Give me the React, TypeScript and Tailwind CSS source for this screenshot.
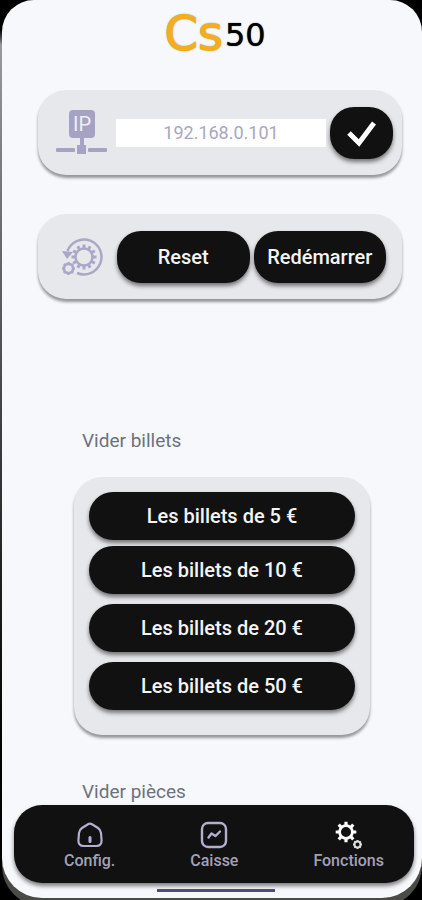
import React, { useState } from 'react';

const BILLS = [
  { value: 5, spacing: '' },
  { value: 10, spacing: 'mt-1.5' },
  { value: 20, spacing: 'mt-2.5' },
  { value: 50, spacing: 'mt-2.5' },
];

const buttonStyle = 'bg-[#111111] text-[#f4f4f4] font-medium text-xl shadow-[0_3px_4px_rgba(0,0,0,0.5)] cursor-pointer';
const panelStyle = 'bg-[#e7e8ec] rounded-[28px] shadow-[0_3px_3px_rgba(0,0,0,0.4)]';

// Teeth for the gear drawings, one short line per tooth
const Teeth: React.FC<{ cx: number; cy: number; inner: number; outer: number; count: number; width: number }> = ({
  cx, cy, inner, outer, count, width,
}) => (
  <>
    {Array.from({ length: count }, (_, i) => (
      <line
        key={i}
        x1={cx}
        y1={cy - inner}
        x2={cx}
        y2={cy - outer}
        strokeWidth={width}
        transform={`rotate(${(i * 360) / count} ${cx} ${cy})`}
      />
    ))}
  </>
);

const IpIcon: React.FC = () => (
  <svg width="52" height="46" viewBox="0 0 52 46" className="shrink-0" fill="#a6a2c4" aria-hidden="true">
    <rect x="13" y="0" width="26" height="28" rx="4" />
    <rect x="24" y="27" width="4" height="8" />
    <rect x="21" y="35" width="9" height="9" />
    <rect x="0" y="38" width="19" height="4" rx="1" />
    <rect x="32" y="38" width="19" height="4" rx="1" />
    <text x="26" y="21" textAnchor="middle" fontSize="20" fill="#eeeef5">IP</text>
  </svg>
);

const RestartIcon: React.FC = () => (
  <svg width="42" height="40" viewBox="0 0 42 40" className="shrink-0" fill="none" stroke="#aaa7c8" aria-hidden="true">
    <path d="M5.5 14 A17.5 17.5 0 1 1 15 36" strokeWidth="2.5" />
    <path d="M0 14 L11 15 L5 22 Z" fill="#aaa7c8" stroke="none" />
    <circle cx="22" cy="20" r="8.5" strokeWidth="2.5" />
    <Teeth cx={22} cy={20} inner={9} outer={12.5} count={12} width={3} />
    <circle cx="6.5" cy="31.5" r="4.6" strokeWidth="2.8" />
    <Teeth cx={6.5} cy={31.5} inner={5} outer={6.5} count={8} width={2} />
  </svg>
);

const HomeIcon: React.FC = () => (
  <svg width="28" height="28" viewBox="0 0 28 28" fill="none" stroke="#b3afd2" strokeWidth="2.2" aria-hidden="true">
    <path d="M12 3.2 Q14 2 16 3.2 L22 7 Q24.6 8.8 25 12 L25.6 19.5 Q25.6 25 20.5 25 H7.5 Q2.4 25 2.4 19.5 L3 12 Q3.4 8.8 6 7 Z" />
    <path d="M14 16.5 V20.5" strokeWidth="3" strokeLinecap="round" />
  </svg>
);

const ChartIcon: React.FC = () => (
  <svg width="28" height="28" viewBox="0 0 28 28" fill="none" stroke="#b3afd2" strokeWidth="2.4" aria-hidden="true">
    <rect x="2" y="2" width="24" height="24" rx="6" />
    <path d="M8.5 16.5 L11.5 12.5 L15.5 15 L20 10.5" strokeLinecap="round" strokeLinejoin="round" />
  </svg>
);

const GearsIcon: React.FC = () => (
  <svg width="28" height="28" viewBox="0 0 28 28" fill="none" stroke="#ffffff" aria-hidden="true">
    <circle cx="11" cy="11" r="6.4" strokeWidth="2.8" />
    <Teeth cx={11} cy={11} inner={7} outer={10.3} count={8} width={3.2} />
    <g stroke="#dddddd">
      <circle cx="22.5" cy="23.5" r="3" strokeWidth="2" />
      <Teeth cx={22.5} cy={23.5} inner={3} outer={4.5} count={8} width={1.8} />
    </g>
  </svg>
);

const NAV_ITEMS = [
  { label: 'Config.', icon: <HomeIcon /> },
  { label: 'Caisse', icon: <ChartIcon /> },
  { label: 'Fonctions', icon: <GearsIcon /> },
];

const App: React.FC = () => {
  const [ip, setIp] = useState('192.168.0.101');

  return (
    <div className="h-screen overflow-hidden bg-black bg-linear-to-b from-black from-3% via-[#9a9a9e] via-5% to-black to-97% pl-0.5 pb-0.5 font-['Roboto','Liberation_Sans',sans-serif]">
      <div className="h-full flex flex-col bg-[#f7f8fc] rounded-t-[32px] rounded-b-[40px] shadow-[0_8px_0_#4a4b46] overflow-hidden">
        <main className="flex-1 min-h-0 overflow-hidden pl-9 pr-5">
          <h1 className="h-[66px] mb-6 pr-2.5 flex items-center justify-center gap-0.5 font-['DejaVu_Sans',sans-serif]">
            <span className="text-5xl text-[#f2ae1c] [text-shadow:0_0_2px_#777777] [-webkit-text-stroke:1px_#f2ae1c]">Cs</span>
            <span className="pt-1 text-[32px] leading-10 text-black [text-shadow:0_0_1px_#000000]">50</span>
          </h1>

          <form className={`${panelStyle} h-[85px] flex items-center pl-[18px] pr-[9px]`} onSubmit={(e) => e.preventDefault()}>
            <IpIcon />
            <input
              type="text"
              aria-label="Adresse IP"
              value={ip}
              onChange={(e) => setIp(e.target.value)}
              className="ml-2 mr-1 flex-1 min-w-0 h-7 bg-white text-center text-lg text-[#aaa6c4] outline-none"
            />
            <button type="submit" aria-label="Valider" className={`${buttonStyle} w-[63px] h-[52px] rounded-3xl flex items-center justify-center`}>
              <svg width="32" height="28" viewBox="0 0 32 28" fill="none" stroke="#ffffff" strokeWidth="5" aria-hidden="true">
                <path d="M3 14 L13 24 L28 4" />
              </svg>
            </button>
          </form>

          <div className={`${panelStyle} mt-[39px] h-[85px] flex items-center pl-6 pr-4`}>
            <RestartIcon />
            <div className="ml-[13px] flex-1 flex gap-1">
              <button type="button" className={`${buttonStyle} flex-1 h-[52px] rounded-3xl`}>Reset</button>
              <button type="button" className={`${buttonStyle} flex-1 h-[52px] rounded-3xl`}>Redémarrer</button>
            </div>
          </div>

          <section className="mt-32 pl-9 pr-8">
            <h2 className="pl-2 text-[19px] leading-7 text-[#6c727c]">Vider billets</h2>
            <div className={`${panelStyle} mt-[22px] pt-[15px] px-[15px] pb-[25px] flex flex-col`}>
              {BILLS.map(({ value, spacing }) => (
                <button key={value} type="button" className={`${buttonStyle} ${spacing} h-12 rounded-3xl`}>
                  Les billets de {value} €
                </button>
              ))}
            </div>
          </section>

          <section className="mt-[43px] pl-9 pr-8">
            <h2 className="pl-2 text-[19px] leading-7 text-[#6c727c]">Vider pièces</h2>
          </section>
        </main>

        <nav className="shrink-0 ml-3 mr-2 h-[78px] pt-1.5 pl-[50px] pr-[30px] bg-[#111111] rounded-[28px] shadow-[0_3px_4px_rgba(0,0,0,0.5)] flex items-center justify-between">
          {NAV_ITEMS.map(({ label, icon }) => (
            <a key={label} href="#" className="flex flex-col items-center text-base font-medium leading-6 text-[#a3a1b8]">
              {icon}
              {label}
            </a>
          ))}
        </nav>
        <div className="shrink-0 mt-1.5 mb-1.5 ml-2 w-[118px] h-[3px] self-center bg-[#514d79]" />
      </div>
    </div>
  );
};

export default App;
